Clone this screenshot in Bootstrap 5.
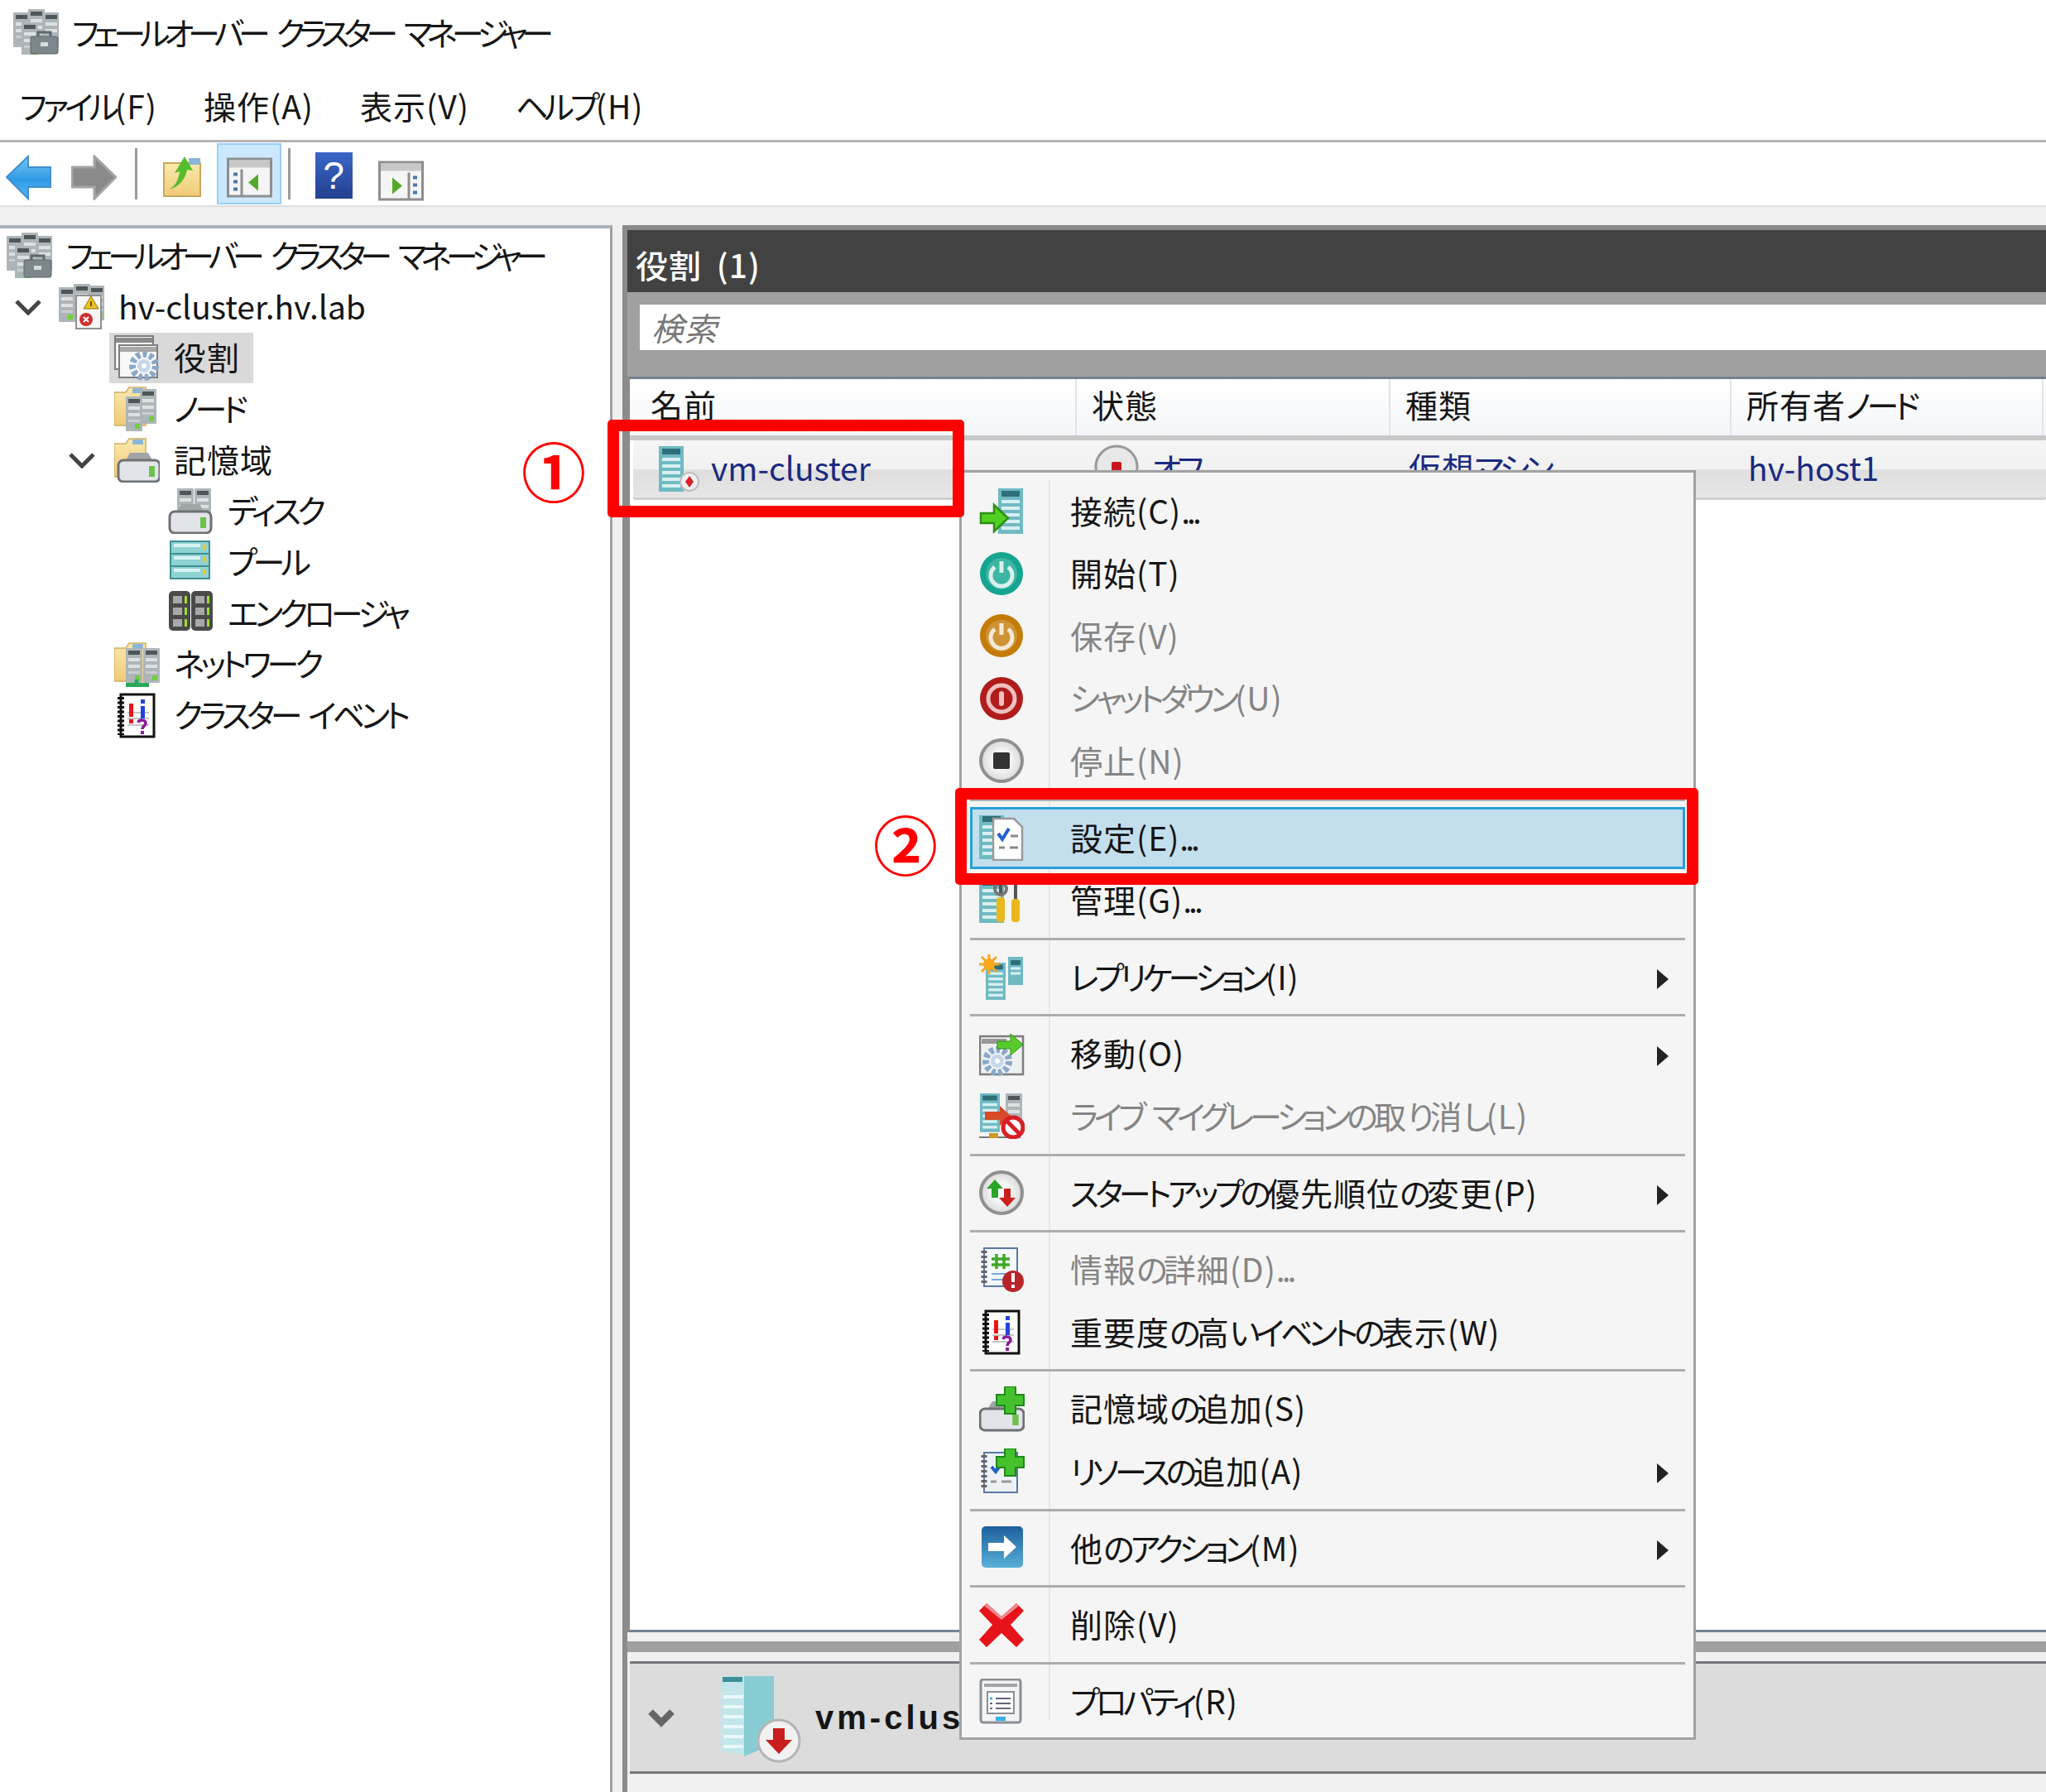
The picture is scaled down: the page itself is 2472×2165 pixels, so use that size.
<!DOCTYPE html>
<html lang="ja">
<head>
<meta charset="UTF-8" />
<title>フェールオーバー クラスター マネージャー</title>
<link href="https://cdn.jsdelivr.net/npm/bootstrap@5.3.0/dist/css/bootstrap.min.css" rel="stylesheet" />
<style>
body { margin: 0; background: #fff; }
.app { width: 2472px; height: 2165px; overflow: hidden; position: relative; background: #fff; color: #151515; font-family: "Noto Sans CJK JP", sans-serif; font-size: 39px; line-height: 1.2; font-feature-settings: "palt"; letter-spacing: 1px; white-space: nowrap; }
.kn { letter-spacing: -5px; word-spacing: 8px; }
.kt { letter-spacing: -7px; word-spacing: 12px; }
.dt { letter-spacing: -4px; }
.la { letter-spacing: 0; }
.ic { width: 55px; height: 55px; flex: none; display: block; }
/* top bars */
.ttl { height: 76px; padding-left: 16px; gap: 16px; }
.mbar { height: 96px; padding: 10px 0 0 24px; gap: 56px; border-bottom: 3px solid #b4b4b4; }
.tbar { height: 78px; padding-left: 7px; border-bottom: 2px solid #dedede; }
.tbar .ic { margin-top: 8px; }
.tb-f { margin-left: 24px; }
.tb-s1 { margin-left: 22px; }
.tb-u { margin-left: 30px; }
.tb-o { margin-left: 11px; }
.tb-s2 { margin-left: 8px; }
.tb-h { margin-left: 30px; width: 45px; height: 56px; flex: none; margin-top: 4px; }
.tbar .tb-p { margin-left: 31px; margin-top: 16px; }
.tb-sep { width: 3px; height: 62px; background: #9a9a9a; flex: none; }
.tb-on { width: 78px; height: 74px; background: #cce8ff; border: 2px solid #99d1ff; flex: none; }
.workarea { height: 1999px; background: #f0f0f0; padding-top: 22px; }
/* tree */
.treepane { width: 740px; flex: none; background: #fff; border-top: 4px solid #a9b3bd; border-right: 3px solid #a0a0a0; padding-top: 2px; }
.t-row { height: 61.7px; }
.t-row .ic { margin-right: 17px; }
.t-row span { margin-top: -3px; }
.t-chev { width: 34px; height: 20px; flex: none; }
.lv0 { padding-left: 8px; }
.lv1 { padding-left: 17px; }
.lv1 .t-chev { margin-right: 20px; }
.lv2 { padding-left: 138px; }
.lv2c { padding-left: 82px; }
.lv2c .t-chev { margin-right: 22px; }
.lv3 { padding-left: 203px; }
.t-sel { background: #d9d9d9; height: 61px; padding: 0 16px 0 6px; margin-left: -6px; }
/* right pane */
.rpane { margin-left: 12px; flex: 1; min-width: 0; border-left: 6px solid #8c8c8c; background: #f0f0f0; }
.r-head { height: 81px; background: #424242; border-top: 6px solid #8a8a8a; color: #fff; padding: 8px 0 0 10px; font-weight: 500; word-spacing: 8px; }
.r-search { height: 102px; background: #a0a0a0; padding: 15px 0 0 15px; }
.r-input { height: 55px; background: #fff; padding-left: 14px; font-style: italic; color: #777; line-height: 55px; }
.r-list { height: 1517px; background: #fff; border-top: 3px solid #74828f; border-bottom: 3px solid #74828f; border-left: 3px solid #8c8c8c; }
.l-head { height: 68px; background: linear-gradient(#fff, #f4f6f9); }
.l-cell { height: 100%; padding-left: 18px; border-right: 2px solid #e1e4e8; flex: none; line-height: 60px; overflow: hidden; }
.w1 { width: 540px; padding-left: 25px; }
.w2 { width: 379px; }
.w3 { width: 412px; }
.w4 { width: 377px; }
.l-line { height: 6px; background: #c9c9c9; }
.l-row { height: 72px; margin-left: 4px; background: linear-gradient(#f5f5f5 0, #f1f1f1 50%, #dfdfdf 52%, #e6e6e6 100%); border-bottom: 3px solid #cfcfcf; color: #1a2a80; border-radius: 3px; }
.l-rcell { height: 100%; flex: none; padding-left: 18px; padding-bottom: 5px; }
.r-w1 { width: 536px; padding-left: 31px; gap: 8px; padding-bottom: 0; }
.r-w1 span { margin-top: -5px; }
.r-w2 { width: 379px; padding-left: 21px; gap: 14px; }
.r-w3 { width: 412px; padding-left: 22px; }
.r-w4 { width: 377px; padding-left: 20px; }
.bandwrap { height: 35px; padding: 11px 0; }
.band { height: 13px; background: #a0a0a0; }
.p-sum { height: 136px; background: #dcdcdc; border-top: 3px solid #74787c; border-bottom: 3px solid #74787c; margin-left: 3px; }
.p-chev { width: 34px; height: 25px; margin-left: 21px; }
.p-srv { width: 100px; height: 110px; margin-left: 55px; }
.p-name { font-family: "Liberation Sans", sans-serif; font-weight: 700; font-size: 40px; letter-spacing: 4px; margin-left: 14px; }
/* context menu */
.ctx { position: absolute; left: 1159px; top: 568px; width: 890px; height: 1534px; background: #f5f5f5; border: 3px solid #a2a2a2; padding: 9px 10px 0 10px; }
.ctx::before { content: ""; position: absolute; left: 105px; top: 9px; bottom: 20px; width: 2px; background: #e6e6e6; }
.m-item { height: 75.5px; position: relative; padding-left: 8px; border: 3px solid transparent; }
.m-item .ic { margin-right: 55px; }
.m-item > span { margin-top: -3px; }
.m-off { color: #858585; }
.m-sel { background: #c3dfed; border-color: #26a0da; }
.m-sep { height: 17.2px; position: relative; }
.m-sep::after { content: ""; position: absolute; left: 0; right: 0; top: 7px; height: 3px; background: #adadad; }
.m-arrow { position: absolute; right: 17px; top: 25px; width: 0; height: 0; border-left: 14px solid #222; border-top: 12px solid transparent; border-bottom: 12px solid transparent; }
.pw-teal { color: #13a58f; }
.pw-amber { color: #c47c08; }
/* annotations */
.r-box { position: absolute; border: 14px solid #f00; border-radius: 5px; }
.r-box-1 { left: 734px; top: 507px; width: 431px; height: 118px; }
.r-box-2 { left: 1154px; top: 952px; width: 898px; height: 117px; }
.r-num { position: absolute; color: #f00; font-size: 78px; line-height: 78px; font-weight: 700; letter-spacing: 0; font-feature-settings: normal; }
.r-num-1 { left: 630px; top: 528px; }
.r-num-2 { left: 1055px; top: 979px; }
</style>
</head>
<body>
<svg width="0" height="0" class="position-absolute">
<defs>
<linearGradient id="gBlue" x1="0" y1="0" x2="0" y2="1"><stop offset="0" stop-color="#7cc8f5"/><stop offset=".55" stop-color="#2e9be6"/><stop offset="1" stop-color="#5bb5ee"/></linearGradient>
<linearGradient id="gHelp" x1="0" y1="0" x2="0" y2="1"><stop offset="0" stop-color="#3a66c8"/><stop offset="1" stop-color="#25408f"/></linearGradient>
<linearGradient id="gFold" x1="0" y1="0" x2="0" y2="1"><stop offset="0" stop-color="#fbe9ae"/><stop offset="1" stop-color="#efcb77"/></linearGradient>
<linearGradient id="gMore" x1="0" y1="0" x2="0" y2="1"><stop offset="0" stop-color="#1d5f9c"/><stop offset="1" stop-color="#58b0d8"/></linearGradient>
<radialGradient id="gStop"><stop offset=".3" stop-color="#fff"/><stop offset="1" stop-color="#d8d8d8"/></radialGradient>
<g id="gs"><rect width="20" height="42" rx="1" fill="#aeb5b9"/><rect x="3" y="3" width="14" height="5" fill="#4f565a"/><rect x="3" y="12" width="14" height="4" fill="#dde1e3"/><rect x="3" y="20" width="14" height="4" fill="#dde1e3"/><rect x="3" y="28" width="14" height="3" fill="#c9ced1"/><rect x="11" y="33" width="6" height="6" fill="#6fd03f"/></g>
<g id="tw"><rect width="30" height="55" fill="#70bac2"/><rect x="4" y="3" width="22" height="7" fill="#2f6f7a"/><rect x="4" y="14" width="22" height="4" fill="#d8f0f2"/><rect x="4" y="22" width="22" height="4" fill="#d8f0f2"/><rect x="4" y="30" width="22" height="4" fill="#d8f0f2"/><rect x="4" y="38" width="22" height="4" fill="#d8f0f2"/><rect x="4" y="46" width="22" height="4" fill="#d8f0f2"/></g>
<g id="fold"><path d="M0 8h14l4-6h20v46H0z" fill="url(#gFold)" stroke="#cfae62" stroke-width="1.500"/><rect x="22" y="3" width="13" height="6" fill="#8ab7d8"/></g>
<g id="dsk"><path d="M9 10l5-9h22l5 9z" fill="#a0a5a8"/><rect x="0" y="10" width="50" height="26" rx="6" fill="#e3e4ea" stroke="#6d7275" stroke-width="3"/><rect x="37" y="17" width="7" height="13" fill="#6cc24a"/></g>
<g id="note"><rect x="8" y="2" width="40" height="51" fill="#fff" stroke="#111" stroke-width="3"/><path d="M8 5v46" stroke="#111" stroke-width="8" stroke-dasharray="3 2.500"/><path d="M16 24h26M16 31h26M16 39h26" stroke="#c4c4c4" stroke-width="2"/><rect x="18" y="13" width="5" height="16" fill="#e8141a"/><rect x="18" y="32" width="5" height="5" fill="#e8141a"/><rect x="32" y="8" width="5" height="5" fill="#2244dd"/><rect x="32" y="16" width="5" height="15" fill="#2244dd"/><path d="M29 36c1-4 9-4 9 1 0 3-4 3-4 7" fill="none" stroke="#8a1a9a" stroke-width="3.500"/><rect x="32" y="46" width="4" height="4" fill="#8a1a9a"/></g>
<g id="gear"><circle r="14" fill="none" stroke="#8aa8c8" stroke-width="8" stroke-dasharray="5 3"/><circle r="8" fill="#c5d8ea"/><circle r="3" fill="#fff"/></g>
<g id="plus"><path d="M10 0h13v10h10v13H23v10H10V23H0V10h10z" fill="#45c12e" stroke="#1f8a1a" stroke-width="2"/></g>
</defs>
<symbol id="i-back" viewBox="0 0 55 55"><path d="M1 27 27 2v13h27v24H27v14z" fill="url(#gBlue)" stroke="#3f8fd0" stroke-width="2"/></symbol>
<symbol id="i-fwd" viewBox="0 0 55 55"><path d="M54 27 28 2v13H1v24h27v14z" fill="#8a8a8a" stroke="#a4a4a4" stroke-width="3"/></symbol>
<symbol id="i-up" viewBox="0 0 55 55"><path d="M2 10h44v40H2z" fill="url(#gFold)" stroke="#c9a85c" stroke-width="2"/><rect x="32" y="4" width="14" height="8" fill="#8ab7d8"/><path d="M8 42c8-4 12-12 13-22l-6 2 12-20 10 17-7-1c-2 12-10 21-22 24z" fill="#55bd2c"/></symbol>
<symbol id="i-pl" viewBox="0 0 55 48"><rect x="1.500" y="1.500" width="52" height="45" fill="#f5f5f5" stroke="#8e8e8e" stroke-width="3"/><rect x="3" y="3" width="49" height="9" fill="#c8c8c8"/><path d="M18 14v32" stroke="#8e8e8e" stroke-width="3"/><path d="M8 20h5M8 29h5M8 38h5" stroke="#4a78b0" stroke-width="4"/><path d="M38 20v20l-12-10z" fill="#55a82c"/></symbol>
<symbol id="i-pr" viewBox="0 0 55 48"><rect x="1.500" y="1.500" width="52" height="45" fill="#f5f5f5" stroke="#8e8e8e" stroke-width="3"/><rect x="3" y="3" width="49" height="9" fill="#c8c8c8"/><path d="M37 14v32" stroke="#8e8e8e" stroke-width="3"/><path d="M42 20h5M42 29h5M42 38h5" stroke="#4a78b0" stroke-width="4"/><path d="M17 20v20l12-10z" fill="#55a82c"/></symbol>
<symbol id="i-cl" viewBox="0 0 55 55"><use href="#gs" x="0" y="4"/><use href="#gs" x="18" y="0"/><use href="#gs" x="36" y="4"/><use href="#gs" x="10" y="16"/><rect x="21" y="33" width="33" height="21" rx="2" fill="#7d868b" stroke="#5f676b"/><path d="M30 33v-5h15v5" fill="none" stroke="#5f676b" stroke-width="3"/><rect x="33" y="40" width="9" height="5" fill="#d8dcde"/></symbol>
<symbol id="i-hv" viewBox="0 0 55 55"><use href="#gs" x="0" y="4"/><use href="#gs" x="18" y="0"/><use href="#gs" x="36" y="2"/><path d="M21 14h30v40H21z" fill="#f6f6f6" stroke="#909090" stroke-width="2"/><path d="M39 15l9 15H30z" fill="#eec41c" stroke="#8a7010"/><rect x="38" y="21" width="2" height="6" fill="#6a5408"/><circle cx="33" cy="43" r="8" fill="#cf2f2f"/><path d="M30 40l6 6M36 40l-6 6" stroke="#fff" stroke-width="2"/></symbol>
<symbol id="i-role" viewBox="0 0 55 55"><rect x="1" y="1" width="46" height="40" fill="#f3f3f3" stroke="#7d7d7d" stroke-width="2"/><rect x="2" y="3" width="44" height="6" fill="#8a8a8a"/><rect x="6" y="12" width="46" height="39" fill="#f8f8f8" stroke="#7d7d7d" stroke-width="2"/><rect x="7" y="14" width="44" height="6" fill="#a8a8a8"/><use href="#gear" x="36" y="37"/></symbol>
<symbol id="i-node" viewBox="0 0 55 55"><use href="#fold"/><use href="#gs" x="14" y="13"/><use href="#gs" x="31" y="4"/></symbol>
<symbol id="i-stor" viewBox="0 0 55 55"><use href="#fold"/><use href="#dsk" x="5" y="18"/></symbol>
<symbol id="i-disk" viewBox="0 0 55 55"><use href="#gs" x="11" y="0"/><use href="#gs" x="32" y="0"/><use href="#dsk" x="2" y="18"/></symbol>
<symbol id="i-pool" viewBox="0 0 55 55"><g fill="#8fd2d4" stroke="#3f8f93" stroke-width="2"><rect x="3" y="3" width="47" height="15"/><rect x="3" y="18" width="47" height="15"/><rect x="3" y="33" width="47" height="15"/></g><path d="M7 8h32M7 23h32M7 38h32" stroke="#d9f3f3" stroke-width="4"/><path d="M44 7v6M44 22v6M44 37v6" stroke="#f0c820" stroke-width="4"/></symbol>
<symbol id="i-encl" viewBox="0 0 55 55"><rect x="1" y="1" width="26" height="48" rx="5" fill="#4a4a4a"/><rect x="28" y="1" width="26" height="48" rx="5" fill="#4a4a4a"/><g fill="#a8a8a8"><rect x="6" y="7" width="11" height="9"/><rect x="33" y="7" width="11" height="9"/><rect x="6" y="21" width="11" height="9"/><rect x="33" y="21" width="11" height="9"/><rect x="6" y="35" width="11" height="9"/><rect x="33" y="35" width="11" height="9"/></g><g fill="#9edc30"><rect x="20" y="7" width="3" height="9"/><rect x="47" y="7" width="3" height="9"/><rect x="20" y="21" width="3" height="9"/><rect x="47" y="21" width="3" height="9"/><rect x="20" y="35" width="3" height="9"/><rect x="47" y="35" width="3" height="9"/></g></symbol>
<symbol id="i-net" viewBox="0 0 55 55"><use href="#fold"/><use href="#gs" x="14" y="8"/><use href="#gs" x="35" y="8"/><path d="M27 46v5" stroke="#2aa85a" stroke-width="5"/><rect x="14" y="50" width="28" height="5" fill="#2aa85a"/></symbol>
<symbol id="i-note" viewBox="0 0 55 55"><use href="#note"/></symbol>
<symbol id="i-srv-d" viewBox="0 0 55 55"><use href="#tw"/><circle cx="37" cy="43" r="11" fill="#f0f0f0" stroke="#bdbdbd" stroke-width="2"/><path d="M37 36l5 7-5 7-5-7z" fill="#d8202a"/></symbol>
<symbol id="i-off" viewBox="0 0 55 55"><circle cx="27" cy="27" r="25" fill="#e8e8e8" stroke="#9a9a9a" stroke-width="3"/><rect x="21" y="21" width="12" height="18" rx="2" fill="#c8161c"/></symbol>
<symbol id="i-conn" viewBox="0 0 55 55"><use href="#tw" x="23"/><path d="M2 30h16V20l17 16-17 16V42H2z" fill="#4fd022" stroke="#2e8f12" stroke-width="2.500"/></symbol>
<symbol id="i-pw" viewBox="0 0 55 55"><circle cx="27" cy="27" r="26" fill="currentColor"/><circle cx="27" cy="27" r="19" fill="#fff" fill-opacity=".18"/><path d="M19 19a13 13 0 1 0 16 0M27 12v14" fill="none" stroke="#fff" stroke-opacity=".8" stroke-width="5"/></symbol>
<symbol id="i-shut" viewBox="0 0 55 55"><circle cx="27" cy="27" r="26" fill="#b01c1c"/><circle cx="27" cy="27" r="16" fill="none" stroke="#f0c0c0" stroke-width="5"/><rect x="24" y="18" width="6" height="18" rx="3" fill="#f0c0c0"/></symbol>
<symbol id="i-stop" viewBox="0 0 55 55"><circle cx="27" cy="27" r="25" fill="url(#gStop)" stroke="#8f8f8f" stroke-width="4"/><rect x="17" y="17" width="20" height="20" rx="2" fill="#333"/></symbol>
<symbol id="i-set" viewBox="0 0 55 55"><use href="#tw" y="-2"/><path d="M17 4h25l10 10v40H17z" fill="#fff" stroke="#9a9a9a" stroke-width="2.500"/><path d="M23 22l5 7 8-13" fill="none" stroke="#1f5fd0" stroke-width="4"/><path d="M38 25h9M24 39h7M37 39h10" stroke="#888" stroke-width="3"/></symbol>
<symbol id="i-mng" viewBox="0 0 55 55"><use href="#tw"/><path d="M26 4v18M44 2v26" stroke="#555" stroke-width="4"/><circle cx="26" cy="14" r="7" fill="none" stroke="#777" stroke-width="4"/><rect x="21" y="24" width="10" height="30" rx="4" fill="#eab81c"/><rect x="39" y="26" width="10" height="28" rx="4" fill="#eab81c"/></symbol>
<symbol id="i-rep" viewBox="0 0 55 55"><rect x="35" y="3" width="18" height="34" fill="#70bac2"/><rect x="38" y="7" width="12" height="6" fill="#2f6f7a"/><path d="M38 17h12M38 23h12" stroke="#d8f0f2" stroke-width="3"/><use href="#tw" transform="translate(8 10) scale(.8 .82)"/><path d="M12 0v24M0 12h24M3 3l18 18M21 3 3 21" stroke="#f7a81c" stroke-width="3"/><circle cx="12" cy="12" r="7" fill="#f7a81c"/></symbol>
<symbol id="i-mov" viewBox="0 0 55 55"><rect x="1" y="6" width="52" height="46" fill="#eef1f4" stroke="#7d7d7d" stroke-width="2.500"/><rect x="3" y="9" width="30" height="6" fill="#999"/><use href="#gear" x="22" y="36"/><path d="M22 12h16V3l15 13-15 13v-8H22z" fill="#58cb2c" stroke="#2e8f12"/></symbol>
<symbol id="i-can" viewBox="0 0 55 55"><use href="#tw" transform="translate(1 0) scale(.8 .85)"/><use href="#gs" x="32" y="0"/><path d="M7 22h18v-7l13 12-13 12v-7H7z" fill="#d84a2a"/><path d="M0 53h50" stroke="#777" stroke-width="2"/><rect x="12" y="48" width="11" height="6" fill="#d09a20"/><circle cx="41" cy="41" r="12" fill="#fff" stroke="#d81e26" stroke-width="5"/><path d="M33 33l16 16" stroke="#d81e26" stroke-width="5"/></symbol>
<symbol id="i-start" viewBox="0 0 55 55"><circle cx="27" cy="27" r="25" fill="url(#gStop)" stroke="#8f8f8f" stroke-width="4"/><path d="M19 11l10 11h-6v11h-8V22H9z" fill="#2aa52a"/><path d="M34 44 24 33h6V22h8v11h6z" fill="#cc2020"/></symbol>
<symbol id="i-info" viewBox="0 0 55 55"><rect x="6" y="1" width="40" height="46" fill="#f5f8fb" stroke="#5a78a8" stroke-width="2"/><path d="M6 4v40" stroke="#666" stroke-width="7" stroke-dasharray="3 3"/><path d="M21 8v18M30 8v18M15 14h22M15 21h22" stroke="#40a828" stroke-width="3.500"/><path d="M15 32h22M15 39h22" stroke="#7aa8d8" stroke-width="2"/><circle cx="41" cy="41" r="13" fill="#b8242a"/><rect x="39" y="31" width="4" height="11" fill="#fff"/><rect x="39" y="45" width="4" height="4" fill="#fff"/></symbol>
<symbol id="i-adds" viewBox="0 0 55 55"><use href="#dsk" transform="translate(1 17) scale(1.060 1)"/><use href="#plus" x="21"/></symbol>
<symbol id="i-addr" viewBox="0 0 55 55"><rect x="6" y="5" width="40" height="48" fill="#eef2f6" stroke="#5a78a8" stroke-width="2"/><path d="M6 8v42" stroke="#666" stroke-width="7" stroke-dasharray="3 3"/><path d="M15 22l5 6 5-7" fill="none" stroke="#1f5fd0" stroke-width="4"/><path d="M14 40h7M27 40h12" stroke="#999" stroke-width="3"/><use href="#plus" x="21"/></symbol>
<symbol id="i-more" viewBox="0 0 55 55"><rect x="3" y="1" width="50" height="50" rx="5" fill="url(#gMore)"/><path d="M11 21h19v-9l15 14-15 14v-9H11z" fill="#fff"/></symbol>
<symbol id="i-del" viewBox="0 0 55 55"><path d="M9 1 27 17 45 1l9 9-16 17 16 18-9 9-18-17L9 54l-9-9 16-18L0 10z" fill="#e6141a"/><path d="M9 1 27 17 45 1l3 3-21 17L6 4z" fill="#f08a8c"/></symbol>
<symbol id="i-prop" viewBox="0 0 55 55"><rect x="2" y="1" width="48" height="52" rx="3" fill="#f2f4f6" stroke="#8a8f94" stroke-width="3"/><rect x="6" y="6" width="40" height="4" fill="#a0a4a8"/><rect x="10" y="16" width="32" height="26" fill="#fff" stroke="#8a8f94" stroke-width="2"/><path d="M20 24h18M20 30h18M20 36h18" stroke="#667" stroke-width="2"/><path d="M13 24h3" stroke="#38b0ea" stroke-width="3"/><path d="M13 30h3M13 36h3" stroke="#667" stroke-width="2"/><rect x="20" y="46" width="12" height="5" fill="#38b0ea"/></symbol>
<symbol id="i-chev" viewBox="0 0 34 20"><path d="M3 3 17 17 31 3" fill="none" stroke="#454545" stroke-width="5"/></symbol>
</svg>

<div class="app">
	<!-- title -->
	<div class="ttl d-flex align-items-center">
		<svg class="ic"><use href="#i-cl" /></svg>
		<span class="kt">フェールオーバー クラスター マネージャー</span>
	</div>
	<!-- menu -->
	<div class="mbar d-flex align-items-center">
		<span><span class="kn">ファイル</span>(F)</span><span>操作(A)</span><span>表示(V)</span><span><span class="kn">ヘルプ</span>(H)</span>
	</div>
	<!-- toolbar -->
	<div class="tbar d-flex align-items-center">
		<svg class="ic"><use href="#i-back" /></svg>
		<svg class="ic tb-f"><use href="#i-fwd" /></svg>
		<div class="tb-sep tb-s1"></div>
		<svg class="ic tb-u"><use href="#i-up" /></svg>
		<div class="tb-on tb-o d-flex align-items-center justify-content-center"><svg class="ic"><use href="#i-pl" /></svg></div>
		<div class="tb-sep tb-s2"></div>
		<svg class="tb-h" viewBox="0 0 45 56"><rect width="45" height="56" fill="url(#gHelp)" /><text x="22.500" y="44" font-family="Liberation Sans" font-size="46" fill="#fff" text-anchor="middle">?</text></svg>
		<svg class="ic tb-p"><use href="#i-pr" /></svg>
	</div>

	<div class="workarea d-flex">
		<!-- tree -->
		<div class="treepane">
			<div class="t-row lv0 d-flex align-items-center"><svg class="ic"><use href="#i-cl" /></svg><span class="kt">フェールオーバー クラスター マネージャー</span></div>
			<div class="t-row lv1 d-flex align-items-center"><svg class="t-chev"><use href="#i-chev" /></svg><svg class="ic"><use href="#i-hv" /></svg><span class="la">hv-cluster.hv.lab</span></div>
			<div class="t-row lv2 d-flex align-items-center"><div class="t-sel d-flex align-items-center"><svg class="ic"><use href="#i-role" /></svg><span>役割</span></div></div>
			<div class="t-row lv2 d-flex align-items-center"><svg class="ic"><use href="#i-node" /></svg><span class="kn">ノード</span></div>
			<div class="t-row lv2c d-flex align-items-center"><svg class="t-chev"><use href="#i-chev" /></svg><svg class="ic"><use href="#i-stor" /></svg><span>記憶域</span></div>
			<div class="t-row lv3 d-flex align-items-center"><svg class="ic"><use href="#i-disk" /></svg><span class="kn">ディスク</span></div>
			<div class="t-row lv3 d-flex align-items-center"><svg class="ic"><use href="#i-pool" /></svg><span class="kn">プール</span></div>
			<div class="t-row lv3 d-flex align-items-center"><svg class="ic"><use href="#i-encl" /></svg><span class="kn">エンクロージャ</span></div>
			<div class="t-row lv2 d-flex align-items-center"><svg class="ic"><use href="#i-net" /></svg><span class="kn">ネットワーク</span></div>
			<div class="t-row lv2 d-flex align-items-center"><svg class="ic"><use href="#i-note" /></svg><span class="kn">クラスター イベント</span></div>
		</div>

		<!-- roles -->
		<div class="rpane">
			<div class="r-head d-flex align-items-center"><span>役割 (1)</span></div>
			<div class="r-search"><div class="r-input">検索</div></div>
			<div class="r-list">
				<div class="l-head d-flex">
					<div class="l-cell w1">名前</div>
					<div class="l-cell w2">状態</div>
					<div class="l-cell w3">種類</div>
					<div class="l-cell w4">所有者<span class="kn">ノード</span></div>
				</div>
				<div class="l-line"></div>
				<div class="l-row d-flex">
					<div class="l-rcell r-w1 d-flex align-items-center"><svg class="ic"><use href="#i-srv-d" /></svg><span class="la">vm-cluster</span></div>
					<div class="l-rcell r-w2 d-flex align-items-center"><svg class="ic"><use href="#i-off" /></svg><span class="kn">オフ</span></div>
					<div class="l-rcell r-w3 d-flex align-items-center"><span>仮想<span class="kn">マシン</span></span></div>
					<div class="l-rcell r-w4 d-flex align-items-center"><span class="la">hv-host1</span></div>
				</div>
			</div>
			<div class="bandwrap"><div class="band"></div></div>
			<div class="p-sum d-flex align-items-center">
				<svg class="p-chev" viewBox="0 0 34 25"><path d="M4 5 17 18 30 5" fill="none" stroke="#666" stroke-width="8" /></svg>
				<svg class="p-srv" viewBox="0 0 100 110">
					<path d="M0 5h28v95l-28-4z" fill="#c2e6ea" /><path d="M28 5h36v82l-36 15z" fill="#88cdd4" /><path d="M2 6h24v6H2z" fill="#3f8f99" />
					<path d="M3 30h24M3 42h24M3 54h24M3 66h24M3 78h24M3 90h24" stroke="#eaf8fa" stroke-width="4" />
					<circle cx="70" cy="83" r="25" fill="#f2f2f2" stroke="#b5b5b5" stroke-width="3" />
					<path d="M63 68h14v14h9L70 99 54 82h9z" fill="#c81e1e" />
				</svg>
				<span class="p-name">vm-cluster</span>
			</div>
		</div>
	</div>

	<!-- context menu -->
	<div class="ctx">
		<div class="m-item d-flex align-items-center"><svg class="ic"><use href="#i-conn" /></svg><span>接続(C)<span class="dt">...</span></span></div>
		<div class="m-item d-flex align-items-center"><svg class="ic pw-teal"><use href="#i-pw" /></svg><span>開始(T)</span></div>
		<div class="m-item m-off d-flex align-items-center"><svg class="ic pw-amber"><use href="#i-pw" /></svg><span>保存(V)</span></div>
		<div class="m-item m-off d-flex align-items-center"><svg class="ic"><use href="#i-shut" /></svg><span><span class="kn">シャットダウン</span>(U)</span></div>
		<div class="m-item m-off d-flex align-items-center"><svg class="ic"><use href="#i-stop" /></svg><span>停止(N)</span></div>
		<div class="m-sep"></div>
		<div class="m-item m-sel d-flex align-items-center"><svg class="ic"><use href="#i-set" /></svg><span>設定(E)<span class="dt">...</span></span></div>
		<div class="m-item d-flex align-items-center"><svg class="ic"><use href="#i-mng" /></svg><span>管理(G)<span class="dt">...</span></span></div>
		<div class="m-sep"></div>
		<div class="m-item d-flex align-items-center"><svg class="ic"><use href="#i-rep" /></svg><span><span class="kn">レプリケーション</span>(I)</span><i class="m-arrow"></i></div>
		<div class="m-sep"></div>
		<div class="m-item d-flex align-items-center"><svg class="ic"><use href="#i-mov" /></svg><span>移動(O)</span><i class="m-arrow"></i></div>
		<div class="m-item m-off d-flex align-items-center"><svg class="ic"><use href="#i-can" /></svg><span><span class="kn">ライブ マイグレーションの</span>取<span class="kn">り</span>消<span class="kn">し</span>(L)</span></div>
		<div class="m-sep"></div>
		<div class="m-item d-flex align-items-center"><svg class="ic"><use href="#i-start" /></svg><span><span class="kn">スタートアップの</span>優先順位<span class="kn">の</span>変更(P)</span><i class="m-arrow"></i></div>
		<div class="m-sep"></div>
		<div class="m-item m-off d-flex align-items-center"><svg class="ic"><use href="#i-info" /></svg><span>情報<span class="kn">の</span>詳細(D)<span class="dt">...</span></span></div>
		<div class="m-item d-flex align-items-center"><svg class="ic"><use href="#i-note" /></svg><span>重要度<span class="kn">の</span>高<span class="kn">いイベントの</span>表示(W)</span></div>
		<div class="m-sep"></div>
		<div class="m-item d-flex align-items-center"><svg class="ic"><use href="#i-adds" /></svg><span>記憶域<span class="kn">の</span>追加(S)</span></div>
		<div class="m-item d-flex align-items-center"><svg class="ic"><use href="#i-addr" /></svg><span><span class="kn">リソースの</span>追加(A)</span><i class="m-arrow"></i></div>
		<div class="m-sep"></div>
		<div class="m-item d-flex align-items-center"><svg class="ic"><use href="#i-more" /></svg><span>他<span class="kn">のアクション</span>(M)</span><i class="m-arrow"></i></div>
		<div class="m-sep"></div>
		<div class="m-item d-flex align-items-center"><svg class="ic"><use href="#i-del" /></svg><span>削除(V)</span></div>
		<div class="m-sep"></div>
		<div class="m-item d-flex align-items-center"><svg class="ic"><use href="#i-prop" /></svg><span><span class="kn">プロパティ</span>(R)</span></div>
	</div>

	<!-- annotations -->
	<div class="r-box r-box-1"></div>
	<div class="r-box r-box-2"></div>
	<span class="r-num r-num-1">①</span>
	<span class="r-num r-num-2">②</span>
</div>
<script src="https://cdn.jsdelivr.net/npm/bootstrap@5.3.0/dist/js/bootstrap.bundle.min.js"></script>
</body>
</html>
